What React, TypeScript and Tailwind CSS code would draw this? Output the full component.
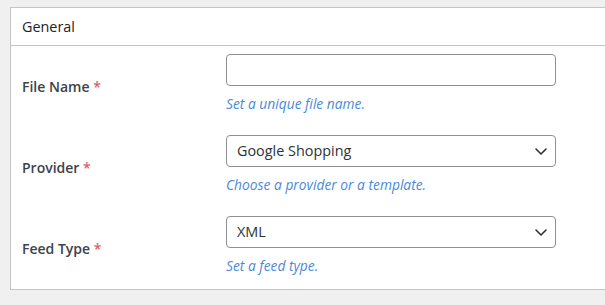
import React from "react";

const Chevron = () => (
  <svg width="14" height="14" viewBox="0 0 14 14" className="absolute right-[7px] top-[8px]">
    <polyline points="2,5 7,10 12,5" fill="none" stroke="#2c3338" strokeWidth="1.6" strokeLinecap="round" strokeLinejoin="round" />
  </svg>
);

const Label = ({ text }: { text: string }) => (
  <div className="w-[204px] shrink-0 text-[14px] font-[560] text-[#3c434a]">
    {text} <span className="text-[#d63638] opacity-80">*</span>
  </div>
);

const Help = ({ text }: { text: string }) => (
  <div className="mt-[9px] h-[18px] text-[13.8px] leading-[18px] italic text-[#4b89d7]">{text}</div>
);

const Select = ({ value }: { value: string }) => (
  <div className="relative w-[330px] h-[32px] border border-[#8c8f94] rounded-[4px] bg-white pl-[10px] flex items-center text-[14.4px] text-[#2c3338]">
    {value}
    <Chevron />
  </div>
);

export default function App() {
  return (
    <div className="w-[605px] h-[305px] overflow-hidden bg-[#f0f0f1] pt-[7px] pl-[10px]" style={{ fontFamily: '"Open Sans", sans-serif' }}>
      <div className="w-[620px] border border-[#c3c4c7] bg-white">
        <div className="h-[38px] border-b border-[#c3c4c7] px-[11px] flex items-center text-[14.4px] font-medium text-[#1d2327]">
          General
        </div>
        <div className="flex items-center pl-[11px]">
          <Label text="File Name" />
          <div className="flex flex-col pt-[8px] pb-[14px]">
            <div className="w-[330px] h-[32px] border border-[#8c8f94] rounded-[4px] bg-white" />
            <Help text="Set a unique file name." />
          </div>
        </div>
        <div className="flex items-center pl-[11px]">
          <Label text="Provider" />
          <div className="flex flex-col pt-[8px] pb-[14px]">
            <Select value="Google Shopping" />
            <Help text="Choose a provider or a template." />
          </div>
        </div>
        <div className="flex items-center pl-[11px]">
          <Label text="Feed Type" />
          <div className="flex flex-col pt-[8px] pb-[14px]">
            <Select value="XML" />
            <Help text="Set a feed type." />
          </div>
        </div>
      </div>
    </div>
  );
}
